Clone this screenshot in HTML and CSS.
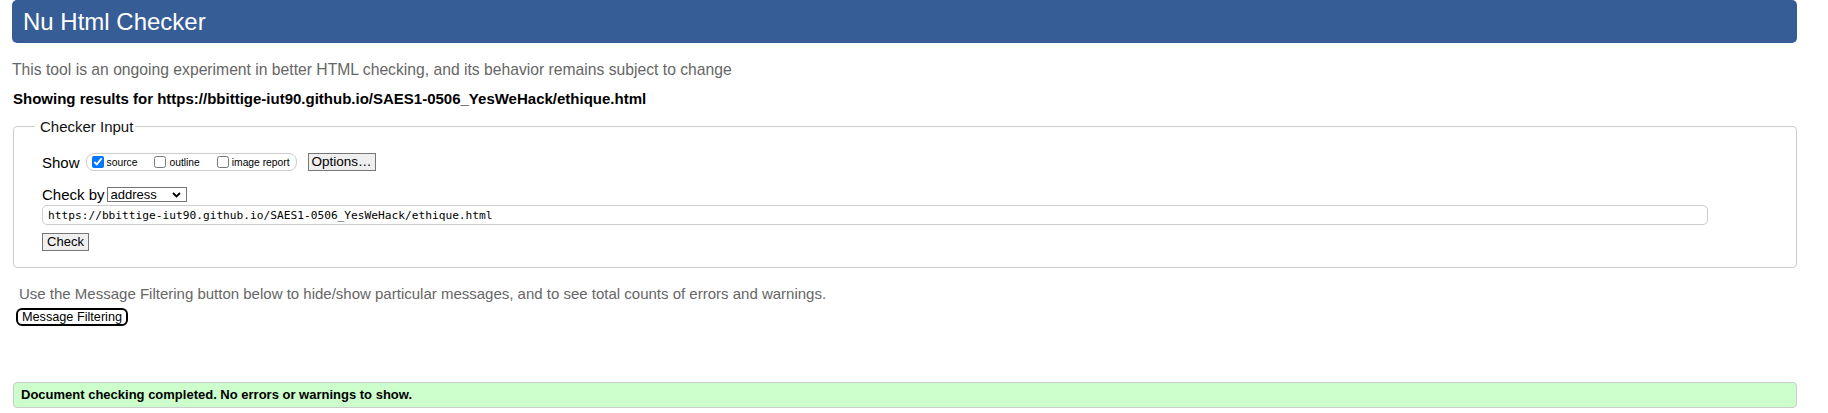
FILE: index.html
```html
<!DOCTYPE html>
<html lang="en">
<head>
<meta charset="utf-8">
<title>Nu Html Checker</title>
<link rel="stylesheet" href="styles.css">
</head>
<body>
<h1 class="title">Nu Html Checker</h1>
<p class="intro">This tool is an ongoing experiment in better HTML checking, and its behavior remains subject to change</p>
<p class="showing">Showing results for https://bbittige-iut90.github.io/SAES1-0506_YesWeHack/ethique.html</p>
<form class="form">
  <fieldset class="input-set">
    <legend class="legend">Checker Input</legend>
    <div class="row row-show">
      <span class="label">Show</span>
      <span class="opts">
        <label class="opt"><input type="checkbox" class="cb" checked>source</label>
        <label class="opt"><input type="checkbox" class="cb">outline</label>
        <label class="opt"><input type="checkbox" class="cb">image report</label>
      </span>
      <button type="button" class="btn btn-options">Options…</button>
    </div>
    <div class="row row-by">
      <span class="label">Check by</span>
      <span class="sel-wrap">
        <select class="sel"><option>address</option></select>
        <svg class="chev" width="9" height="6" viewBox="0 0 9 6" aria-hidden="true"><path d="M1 1 L4.5 4.5 L8 1" fill="none" stroke="#000" stroke-width="1.8"/></svg>
      </span>
    </div>
    <div class="row row-url">
      <input class="url" type="url" value="https://bbittige-iut90.github.io/SAES1-0506_YesWeHack/ethique.html">
    </div>
    <div class="row row-check">
      <button type="button" class="btn btn-check">Check</button>
    </div>
  </fieldset>
</form>
<p class="filter-note">Use the Message Filtering button below to hide/show particular messages, and to see total counts of errors and warnings.</p>
<div class="filter-wrap"><button type="button" class="btn-filter">Message Filtering</button></div>
<div class="success">Document checking completed. No errors or warnings to show.</div>
</body>
</html>
```

FILE: styles.css
```css
html, body {
  background: #fff;
}
body {
  margin: 0;
  padding: 0 31px 0 12px;
  font-family: "Liberation Sans", Arial, sans-serif;
  color: #000;
}
.title {
  margin: 0;
  height: 43px;
  line-height: 43px;
  padding: 0 0 0 11px;
  background: #365d95;
  color: #fff;
  font-size: 24px;
  font-weight: normal;
  border-radius: 5px;
}
.intro {
  margin: 18px 0 0 0;
  font-size: 15.7px;
  line-height: 18px;
  color: #666;
}
.showing {
  margin: 11px 0 0 1px;
  font-size: 15px;
  line-height: 17px;
  font-weight: bold;
}
.form {
  margin: 11px 0 0 1px;
}
.input-set {
  margin: 0;
  padding: 18px 20px 16px 28px;
  border: 1px solid #ccc;
  border-radius: 4px;
  min-width: 0;
}
.legend {
  margin-left: -7px;
  padding: 0 2px 0 5px;
  font-size: 15px;
  line-height: 17px;
  color: #111;
}
.row {
  display: flex;
  align-items: center;
}
.label {
  font-size: 15px;
  line-height: 17px;
}
.row-show {
  height: 18px;
}
.row-show .label {
  margin-right: 6px;
}
.opts {
  display: flex;
  align-items: center;
  height: 16px;
  padding: 0 6px 0 5px;
  border: 1px solid #ccc;
  border-radius: 8px;
}
.opt {
  display: flex;
  align-items: center;
  font-size: 10.3px;
  line-height: 12px;
  margin-right: 17px;
  padding-top: 2px;
}
.opt:last-child {
  margin-right: 0;
}
.cb {
  width: 12px;
  height: 12px;
  margin: -3px 3px 0 0;
  accent-color: #0075ff;
}
.btn {
  font-family: "Liberation Sans", Arial, sans-serif;
  color: #000;
  background: #efefef;
  border: 1px solid #767676;
  border-radius: 0;
  padding: 0 6px;
  margin: 0;
}
.btn-options {
  margin-left: 11px;
  height: 18px;
  width: 68px;
  font-size: 13.5px;
  line-height: 16px;
  padding: 0;
}
.row-by {
  margin-top: 15px;
  height: 16px;
}
.row-by .label {
  margin-right: 2px;
}
.sel-wrap {
  position: relative;
  display: block;
  width: 80px;
  height: 15px;
}
.sel {
  display: block;
  box-sizing: border-box;
  width: 80px;
  height: 15px;
  margin: 0;
  font-family: "Liberation Sans", Arial, sans-serif;
  font-size: 13px;
  line-height: 13px;
  padding: 0 0 0 3px;
  border: 1px solid #767676;
  border-radius: 0;
  background: #fff;
  color: #000;
  text-align: left;
  appearance: none;
  -webkit-appearance: none;
}
.chev {
  position: absolute;
  right: 6px;
  top: 5px;
  pointer-events: none;
}
.row-url {
  margin-top: 3px;
}
.url {
  box-sizing: border-box;
  width: 1666px;
  height: 20px;
  padding: 0 5px;
  border: 1px solid #ccc;
  border-radius: 5px;
  font-family: "DejaVu Sans Mono", "Liberation Mono", monospace;
  font-size: 11.2px;
  color: #000;
  outline: none;
}
.row-check {
  margin-top: 8px;
}
.btn-check {
  width: 47px;
  height: 18px;
  font-size: 13px;
  line-height: 16px;
  padding: 0;
}
.filter-note {
  margin: 17px 0 0 7px;
  font-size: 15px;
  line-height: 17px;
  color: #666;
}
.filter-wrap {
  margin: 6px 0 0 4px;
}
.btn-filter {
  height: 18px;
  width: 112px;
  padding: 0;
  font-family: "Liberation Sans", Arial, sans-serif;
  font-size: 12.7px;
  line-height: 14px;
  color: #000;
  background: #fff;
  border: 2px solid #000;
  border-radius: 6px;
  display: block;
}
.success {
  margin: 56px 0 0 1px;
  height: 26px;
  box-sizing: border-box;
  padding: 4px 7px;
  line-height: 16px;
  font-size: 13px;
  font-weight: bold;
  background: #ccffcc;
  border: 1px solid #ccc;
  border-radius: 4px;
}
```
